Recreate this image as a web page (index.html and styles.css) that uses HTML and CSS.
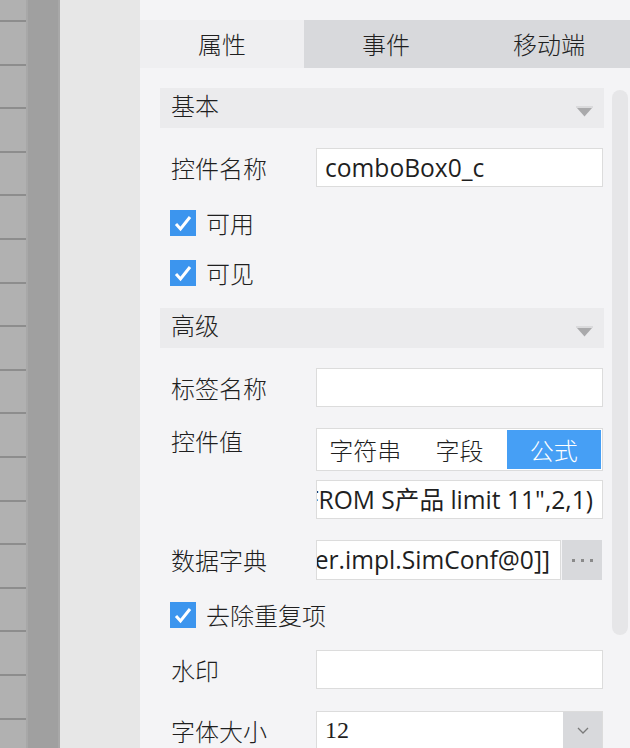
FILE: index.html
```html
<!DOCTYPE html>
<html lang="zh-CN">
<head>
<meta charset="utf-8">
<title>属性面板</title>
<link rel="stylesheet" href="styles.css">
</head>
<body>
<div class="app">
  <div class="ruler"></div>
  <div class="gutter"></div>
  <div class="canvas-edge"></div>
  <div class="panel">
    <div class="tabs">
      <div class="tab active">属性</div>
      <div class="tab">事件</div>
      <div class="tab">移动端</div>
    </div>
    <div class="body">
      <div class="content">
        <div class="section">
          <span>基本</span>
          <svg class="caret" width="17" height="11" viewBox="0 0 17 11"><rect x="0" y="0" width="17" height="2" fill="#dadadc"/><polygon points="1,2 16,2 8.5,10.5" fill="#a9a9ab"/></svg>
        </div>
        <div class="row r-name">
          <div class="label">控件名称</div>
          <div class="field">comboBox0_c</div>
        </div>
        <div class="check c-first">
          <span class="box"><svg width="26" height="26" viewBox="0 0 26 26"><polyline points="6,14 10.5,19 20,7" fill="none" stroke="#fff" stroke-width="3"/></svg></span>
          <span>可用</span>
        </div>
        <div class="check c-second">
          <span class="box"><svg width="26" height="26" viewBox="0 0 26 26"><polyline points="6,14 10.5,19 20,7" fill="none" stroke="#fff" stroke-width="3"/></svg></span>
          <span>可见</span>
        </div>
        <div class="section s-adv">
          <span>高级</span>
          <svg class="caret" width="17" height="11" viewBox="0 0 17 11"><rect x="0" y="0" width="17" height="2" fill="#dadadc"/><polygon points="1,2 16,2 8.5,10.5" fill="#a9a9ab"/></svg>
        </div>
        <div class="row r-tag">
          <div class="label">标签名称</div>
          <div class="field"></div>
        </div>
        <div class="row r-value">
          <div class="label top">控件值</div>
          <div class="col">
            <div class="segmented">
              <div class="seg">字符串</div>
              <div class="seg">字段</div>
              <div class="seg on">公式</div>
            </div>
            <div class="field formula"><span>=SQL("db","SELECT * FROM S产品 limit 11",2,1)</span></div>
          </div>
        </div>
        <div class="row r-dict">
          <div class="label">数据字典</div>
          <div class="field dict"><span>[DictProvider.impl.SimConf@0]]</span></div>
          <div class="more"><i></i><i></i><i></i></div>
        </div>
        <div class="check c-dedup">
          <span class="box"><svg width="26" height="26" viewBox="0 0 26 26"><polyline points="6,14 10.5,19 20,7" fill="none" stroke="#fff" stroke-width="3"/></svg></span>
          <span>去除重复项</span>
        </div>
        <div class="row r-water">
          <div class="label">水印</div>
          <div class="field"></div>
        </div>
        <div class="row r-size">
          <div class="label">字体大小</div>
          <div class="select">
            <div class="select-value">12</div>
            <div class="select-btn"><svg width="12" height="7" viewBox="0 0 12 7"><polyline points="1,1 6,6 11,1" fill="none" stroke="#7a7a7a" stroke-width="1.3"/></svg></div>
          </div>
        </div>
      </div>
      <div class="scrollbar"></div>
    </div>
  </div>
</div>
</body>
</html>
```

FILE: styles.css
```css
* { box-sizing: border-box; }
html, body { margin: 0; padding: 0; }
body {
  width: 630px;
  height: 748px;
  overflow: hidden;
  background: #f4f4f6;
  color: #1f1f1f;
  font-family: "Noto Sans CJK SC", "Noto Sans", sans-serif;
  font-weight: 300;
}
.app { display: flex; height: 748px; }

.ruler {
  width: 26px;
  background: repeating-linear-gradient(to bottom, #b1b1b1 0 20px, #8d8d8d 20px 22px, #b1b1b1 22px 43.6px);
}
.gutter {
  width: 34px;
  background: #a0a0a0;
  border-left: 2px solid #a8a8a8;
  border-right: 2px solid #a8a8a8;
}
.canvas-edge { width: 80px; background: #e7e7e7; }

.panel { width: 490px; padding-top: 20px; background: #f4f4f6; }

.tabs { display: grid; grid-template-columns: 164px 164px 162px; height: 48px; }
.tab {
  display: flex;
  align-items: center;
  justify-content: center;
  background: #d8d9dc;
  font-size: 24px;
  line-height: 24px;
}
.tab.active { background: #efeff1; }

.body { display: flex; padding: 20px 0 0 20px; }
.content { width: 444px; }
.scrollbar {
  width: 16px;
  height: 545px;
  margin: 2px 0 0 8px;
  background: #e6e6e8;
  border-radius: 8px;
}

.section {
  height: 40px;
  display: flex;
  justify-content: space-between;
  align-items: flex-start;
  padding: 5px 11px 0 11px;
  background: #ebebed;
  font-size: 24px;
  line-height: 24px;
}
.section .caret { margin-top: 13px; }
.s-adv { margin-top: 22px; }

.row { display: flex; align-items: center; }
.label {
  width: 156px;
  padding-left: 11px;
  font-size: 24px;
  line-height: 24px;
  flex: none;
}
.label.top { margin-top: 1px; align-self: flex-start; }

.field {
  width: 287px;
  height: 39px;
  background: #fff;
  border: 1px solid #dcdcdc;
  padding: 0 8px;
  display: flex;
  align-items: center;
  font-family: "Open Sans", "Noto Sans CJK SC", sans-serif;
  font-weight: 400;
  font-size: 24.6px;
  line-height: 24px;
  white-space: nowrap;
  overflow: hidden;
  flex: none;
}
.field.formula, .field.dict { justify-content: flex-end; }
.field.formula { padding-right: 9px; }
.field.dict { width: 245px; height: 40px; padding-right: 10px; }
.field span { flex: none; }

.r-name { margin-top: 20px; }
.r-tag { margin-top: 20px; }
.r-value { margin-top: 21px; align-items: flex-start; }
.r-dict { margin-top: 21px; }
.r-water { margin-top: 22px; }
.r-size { margin-top: 22px; }

.col { display: flex; flex-direction: column; gap: 9px; }

.segmented {
  width: 287px;
  height: 43px;
  display: flex;
  padding: 1px;
  background: #fff;
  border: 1px solid #dcdcdc;
}
.seg {
  flex: 1;
  display: flex;
  align-items: center;
  justify-content: center;
  font-size: 24px;
  line-height: 24px;
}
.seg.on { background: #469ff5; color: #fff; }

.more {
  width: 40px;
  height: 40px;
  margin-left: 1px;
  background: #d8d9dc;
  display: flex;
  align-items: center;
  justify-content: center;
  gap: 6px;
}
.more i { width: 3px; height: 3px; background: #8a8a8a; display: block; }

.check {
  display: flex;
  align-items: center;
  gap: 10px;
  padding-left: 10px;
  height: 26px;
  font-size: 24px;
  line-height: 24px;
}
.check .box { width: 26px; height: 26px; background: #3c95ee; display: block; }
.check .box svg { display: block; }
.c-first { margin-top: 23px; }
.c-second { margin-top: 24px; }
.c-dedup { margin-top: 22px; }

.select {
  width: 287px;
  height: 39px;
  display: flex;
  background: #fff;
  border: 1px solid #dcdcdc;
  flex: none;
}
.select-value {
  flex: 1;
  padding-left: 8px;
  display: flex;
  align-items: center;
  font-family: "Liberation Serif", serif;
  font-weight: 400;
  font-size: 24px;
}
.select-btn {
  width: 39px;
  background: #d8d9dc;
  display: flex;
  align-items: center;
  justify-content: center;
}
.select-btn svg { display: block; }
```
